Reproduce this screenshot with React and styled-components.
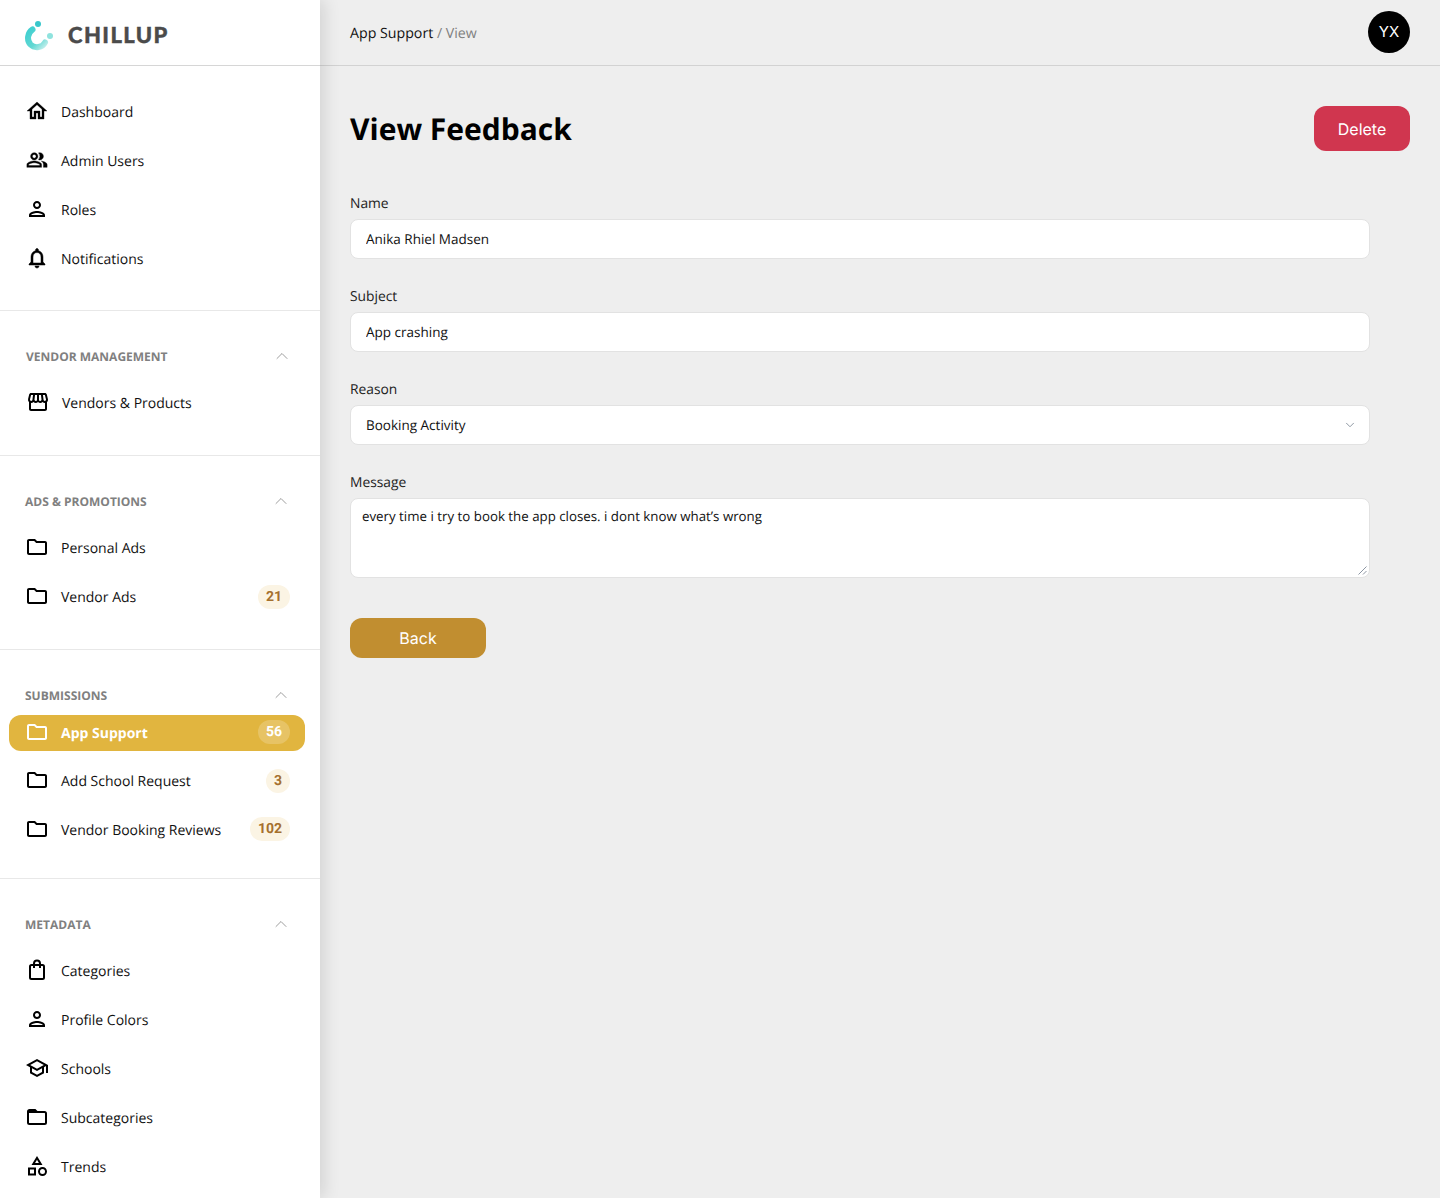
import React from 'react';
import styled, { createGlobalStyle } from 'styled-components';
import { ChevronDown, ChevronUp } from 'lucide-react';
import {
  MdOutlineHome,
  MdOutlinePeopleAlt,
  MdOutlinePerson,
  MdOutlineNotifications,
  MdOutlineStorefront,
  MdOutlineFolder,
  MdOutlineSchool,
  MdOutlineCategory,
} from 'react-icons/md';

const GlobalStyle = createGlobalStyle`
  html, body {
    margin: 0;
    padding: 0;
    background: #eeeeee;
    font-family: "Open Sans", "Liberation Sans", sans-serif;
    color: #111;
    text-rendering: geometricPrecision;
  }
  * { box-sizing: border-box; }
`;

const Page = styled.div`
  display: flex;
  height: 100vh;
  overflow: hidden;
`;

const Sidebar = styled.aside`
  flex: 0 0 320px;
  background: #fff;
  box-shadow: 4px 0 16px rgba(0, 0, 0, 0.12);
  position: relative;
  z-index: 1;
`;

const Brand = styled.div`
  height: 66px;
  display: flex;
  align-items: center;
  gap: 13px;
  padding: 4px 0 0 24px;
  border-bottom: 1px solid #d6d6d6;
`;

const BrandName = styled.span`
  font-family: Lato, "Open Sans", sans-serif;
  font-weight: 900;
  font-size: 22px;
  letter-spacing: 1.4px;
  color: #4b4b4b;
  -webkit-text-stroke: 0.4px #4b4b4b;
`;

const Section = styled.section`
  padding-top: ${p => (p.$first ? 28 : 35)}px;
  padding-bottom: ${p => p.$bottom}px;
  border-bottom: ${p => (p.$last ? 'none' : '1px solid #e8e8e8')};
`;

const SectionHead = styled.div`
  height: 20px;
  display: flex;
  align-items: center;
  justify-content: space-between;
  padding: 0 29px 0 ${p => (p.$inset ? 26 : 25)}px;
  margin-bottom: ${p => (p.$tight ? 10 : 19)}px;
  font-size: 12px;
  font-weight: 700;
  text-transform: uppercase;
  color: #808080;

  svg {
    color: #8a8a8a;
    margin: 0 ${p => (p.$inset ? -1 : 0)}px 1px 0;
  }
`;

const Row = styled.div`
  height: 36px;
  width: 296px;
  margin: 0 0 ${p => (p.$active ? 12 : 13)}px 9px;
  padding: 0 15px 2px ${p => (p.$inset ? 17 : 16)}px;
  display: flex;
  align-items: center;
  gap: 12px;
  border-radius: 12px;
  font-size: 14px;
  font-weight: ${p => (p.$active ? 700 : 400)};
  color: ${p => (p.$active ? '#fff' : '#111')};
  background: ${p => (p.$active ? '#e1b53f' : 'transparent')};

  &:last-child { margin-bottom: 0; }
  > svg { flex: none; font-size: 24px; color: ${p => (p.$active ? '#fff' : '#000')}; }
`;

const RowLabel = styled.span`
  flex: 1;
  padding-top: 2px;
  white-space: nowrap;
`;

const Badge = styled.span`
  min-width: 24px;
  height: 24px;
  padding: 0 8px;
  margin-top: ${p => p.$drop || 0}px;
  display: flex;
  align-items: center;
  justify-content: center;
  border-radius: 12px;
  font-family: Roboto, sans-serif;
  font-size: 14px;
  font-weight: 700;
  color: ${p => (p.$active ? '#fff' : '#a5702e')};
  background: ${p => (p.$active ? 'rgba(255,255,255,0.2)' : '#fbf4e4')};
`;

// the reference draws these few a little heavier than the stock glyphs
const HomeIcon = styled(MdOutlineHome)`
  stroke-width: 0.35px;
  path[fill='none'] { stroke: none; }
`;
const PeopleIcon = styled(MdOutlinePeopleAlt)`
  stroke-width: 0.4px;
  transform: scale(0.92);
  path[fill='none'] { stroke: none; }
`;
const BellIcon = styled(MdOutlineNotifications)`
  stroke-width: 0.5px;
  path[fill='none'] { stroke: none; }
`;

const Main = styled.main`
  flex: 1;
  min-width: 0;
`;

const TopBar = styled.header`
  height: 66px;
  display: flex;
  align-items: center;
  justify-content: space-between;
  padding: 0 30px 2px;
  border-bottom: 1px solid #d2d2d2;
`;

const Crumbs = styled.div`
  margin-top: 4px;
  font-size: 14.2px;
  color: #111;
  span { color: #808080; }
`;

const Avatar = styled.div`
  width: 42px;
  height: 42px;
  border-radius: 50%;
  background: #000;
  color: #fff;
  display: flex;
  align-items: center;
  justify-content: center;
  font-family: Inter, sans-serif;
  font-size: 15px;
`;

const Content = styled.div`
  padding: 40px 30px 0;
`;

const TitleRow = styled.div`
  display: flex;
  align-items: center;
  justify-content: space-between;
  margin-bottom: 42px;
`;

const Title = styled.h1`
  margin: 0;
  font-size: 30px;
  font-weight: 700;
  color: #000;
`;

const Button = styled.button`
  border: none;
  color: #fff;
  font-family: Inter, sans-serif;
  font-size: 16px;
  font-weight: 400;
  text-rendering: geometricPrecision;
  border-radius: 12px;
  width: ${p => p.$width}px;
  height: ${p => p.$height}px;
  background: ${p => p.$color};
`;

const Form = styled.form`
  width: 1020px;
  display: flex;
  flex-direction: column;
  gap: 27px;
`;

const Field = styled.label`
  display: flex;
  flex-direction: column;
  gap: 5px;
  padding-top: 1px;
  font-size: 13.8px;
  line-height: 20px;
  color: #222;
`;

const controlCss = `
  width: 100%;
  background: #fff;
  border: 1px solid #e2e2e2;
  border-radius: 8px;
  font-family: "Open Sans", sans-serif;
  font-size: 13.5px;
  color: #111;
  outline: none;
  text-rendering: geometricPrecision;
`;

const TextInput = styled.input`
  ${controlCss}
  height: 40px;
  padding: 0 15px;
`;

const ControlWrap = styled.div`
  position: relative;

  svg {
    position: absolute;
    pointer-events: none;
  }
`;

const SelectChevron = styled(ChevronDown)`
  right: 13px;
  top: 13px;
  color: #7f8996;
`;

const Select = styled.select`
  ${controlCss}
  height: 40px;
  padding: 0 15px;
  appearance: none;
`;

const TextArea = styled.textarea`
  ${controlCss}
  display: block;
  height: 80px;
  padding: 7px 11px;
  font-size: 13.3px;
  line-height: 20px;
  resize: none;
`;

const ResizeGrip = styled.svg`
  right: 3px;
  bottom: 3px;
`;

const Actions = styled.div`
  margin-top: 13px;
`;

const Logo = () => (
  <svg width="31" height="32" viewBox="0 0 31 32" fill="none">
    <defs>
      <linearGradient id="arc" x1="2" y1="12" x2="20" y2="30" gradientUnits="userSpaceOnUse">
        <stop offset="0" stopColor="#3fcfd0" />
        <stop offset="0.6" stopColor="#62d8d3" />
        <stop offset="1" stopColor="#c4efec" />
      </linearGradient>
    </defs>
    <path d="M8.5 10.5 C3.5 14 2.5 21 6.5 25.5 C11 30 18.5 28.5 21 23.5" stroke="url(#arc)" strokeWidth="6" strokeLinecap="round" />
    <circle cx="14" cy="5" r="3" fill="#39c7cb" />
    <circle cx="26" cy="17" r="3" fill="#8fe3de" />
  </svg>
);

const BagIcon = () => (
  <svg width="24" height="24" viewBox="0 0 24 24" fill="none" stroke="currentColor" strokeWidth="2">
    <rect x="5" y="7" width="14" height="14" rx="1.5" />
    <path d="M9 10V5.5a3 3 0 0 1 6 0V10" />
  </svg>
);

const TabFolderIcon = () => (
  <svg width="24" height="24" viewBox="0 0 24 24" fill="none" stroke="currentColor" strokeWidth="2">
    <path d="M3 6.5a1.5 1.5 0 0 1 1.5-1.5H10l2 2h7.5A1.5 1.5 0 0 1 21 8.5v9a1.5 1.5 0 0 1-1.5 1.5h-15A1.5 1.5 0 0 1 3 17.5z" />
    <path d="M3 5.5h7.5l2 2.5H3z" fill="currentColor" stroke="none" />
  </svg>
);

const sections = [
  {
    first: true,
    bottom: 33,
    items: [
      { icon: HomeIcon, label: 'Dashboard' },
      { icon: PeopleIcon, label: 'Admin Users' },
      { icon: MdOutlinePerson, label: 'Roles' },
      { icon: BellIcon, label: 'Notifications' },
    ],
  },
  {
    title: 'Vendor Management',
    inset: true,
    bottom: 34,
    items: [{ icon: MdOutlineStorefront, label: 'Vendors & Products' }],
  },
  {
    title: 'Ads & Promotions',
    bottom: 34,
    items: [
      { icon: MdOutlineFolder, label: 'Personal Ads' },
      { icon: MdOutlineFolder, label: 'Vendor Ads', badge: 21, drop: 2 },
    ],
  },
  {
    title: 'Submissions',
    tight: true,
    bottom: 30,
    items: [
      { icon: MdOutlineFolder, label: 'App Support', badge: 56, active: true },
      { icon: MdOutlineFolder, label: 'Add School Request', badge: 3, drop: 2 },
      { icon: MdOutlineFolder, label: 'Vendor Booking Reviews', badge: 102 },
    ],
  },
  {
    title: 'Metadata',
    last: true,
    bottom: 0,
    items: [
      { icon: BagIcon, label: 'Categories' },
      { icon: MdOutlinePerson, label: 'Profile Colors' },
      { icon: MdOutlineSchool, label: 'Schools' },
      { icon: TabFolderIcon, label: 'Subcategories' },
      { icon: MdOutlineCategory, label: 'Trends' },
    ],
  },
];

export default function App() {
  return (
    <Page>
      <GlobalStyle />
      <Sidebar>
        <Brand>
          <Logo />
          <BrandName>CHILLUP</BrandName>
        </Brand>
        {sections.map((section, i) => (
          <Section key={i} $first={section.first} $last={section.last} $bottom={section.bottom}>
            {section.title && (
              <SectionHead $inset={section.inset} $tight={section.tight}>
                {section.title}
                <ChevronUp size={20} strokeWidth={1} />
              </SectionHead>
            )}
            {section.items.map(({ icon: Icon, label, badge, active, drop }) => (
              <Row key={label} $active={active} $inset={section.inset}>
                <Icon />
                <RowLabel>{label}</RowLabel>
                {badge !== undefined && <Badge $active={active} $drop={drop}>{badge}</Badge>}
              </Row>
            ))}
          </Section>
        ))}
      </Sidebar>
      <Main>
        <TopBar>
          <Crumbs>App Support <span>/ View</span></Crumbs>
          <Avatar>YX</Avatar>
        </TopBar>
        <Content>
          <TitleRow>
            <Title>View Feedback</Title>
            <Button type="button" $width={96} $height={45} $color="#d0364f">Delete</Button>
          </TitleRow>
          <Form>
            <Field>
              Name
              <TextInput readOnly value="Anika Rhiel Madsen" />
            </Field>
            <Field>
              Subject
              <TextInput readOnly value="App crashing" />
            </Field>
            <Field>
              Reason
              <ControlWrap>
                <Select defaultValue="Booking Activity">
                  <option>Booking Activity</option>
                </Select>
                <SelectChevron size={14} strokeWidth={1.5} />
              </ControlWrap>
            </Field>
            <Field>
              Message
              <ControlWrap>
                <TextArea readOnly value="every time i try to book the app closes. i dont know what’s wrong" />
                <ResizeGrip width="9" height="9" viewBox="0 0 9 9" stroke="#8d96a3" strokeWidth="1">
                  <path d="M0.5 8.5L8.5 0.5M5 8.5L8.5 5" />
                </ResizeGrip>
              </ControlWrap>
            </Field>
            <Actions>
              <Button type="button" $width={136} $height={40} $color="#c18e30">Back</Button>
            </Actions>
          </Form>
        </Content>
      </Main>
    </Page>
  );
}
